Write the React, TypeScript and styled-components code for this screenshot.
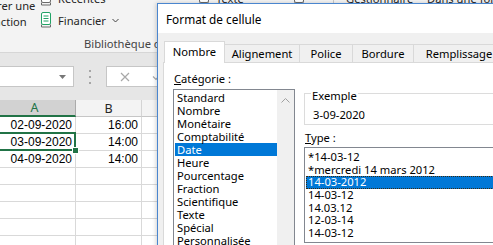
import { Fragment } from "react";
import styled, { createGlobalStyle } from "styled-components";

const GlobalStyle = createGlobalStyle`
  html, body { margin: 0; padding: 0; overflow: hidden; background: #fff; }
`;

const Screen = styled.div`
  position: relative;
  width: 493px;
  height: 245px;
  overflow: hidden;
  font-family: "Noto Sans", "Segoe UI", sans-serif;
  font-size: 11.2px;
  color: #262626;
  background: #fff;
`;

/* ---------- Excel window ---------- */

const Excel = styled.div`
  display: flex;
  flex-direction: column;
`;

const Ribbon = styled.div`
  height: 52px;
  background: #f3f3f3;
  border-bottom: 1px solid #d6d6d6;
  display: flex;
  flex-direction: column;
`;

const RibbonBody = styled.div`
  height: 31px;
  flex-shrink: 0;
  display: flex;
  overflow: hidden;
  white-space: nowrap;
`;

const BigButton = styled.div<{ $width: number; $offset?: number }>`
  width: ${({ $width }) => $width}px;
  margin-left: ${({ $offset = 0 }) => $offset}px;
  flex-shrink: 0;
  display: flex;
  flex-direction: column;
  justify-content: flex-end;
  align-items: center;
  padding-bottom: 1px;
  line-height: 16px;
  color: #262626;
`;

const RibbonColumn = styled.div<{ $width: number }>`
  width: ${({ $width }) => $width}px;
  flex-shrink: 0;
  display: flex;
  flex-direction: column;
  justify-content: flex-end;
`;

const RibbonItem = styled.div`
  height: 22px;
  flex-shrink: 0;
  display: flex;
  align-items: center;
  gap: 6px;
  color: #262626;
`;

const RibbonSeparator = styled.div`
  width: 1px;
  margin: 0 12px 0 0;
  background: #c8c8c8;
  flex-shrink: 0;
`;

const GroupLabel = styled.div`
  padding: 5px 0 0 84px;
  line-height: 16px;
  color: #444;
  white-space: nowrap;
`;

const FormulaBar = styled.div`
  height: 47px;
  background: #e6e6e6;
  display: flex;
  align-items: center;
`;

const NameBox = styled.div`
  width: 75px;
  height: 21px;
  margin-left: -1px;
  box-sizing: border-box;
  background: #fff;
  border: 1px solid #c6c6c6;
  display: flex;
  align-items: center;
  justify-content: flex-end;
  padding-right: 7px;
`;

const Grip = styled.div`
  width: 2px;
  margin: 0 15px 0 15px;
  display: flex;
  flex-direction: column;
  gap: 4px;
  & > span {
    width: 2px;
    height: 2px;
    background: #a6a6a6;
  }
`;

const FxBox = styled.div`
  flex: 1;
  height: 21px;
  box-sizing: border-box;
  background: #fff;
  border: 1px solid #c6c6c6;
  display: flex;
  align-items: center;
  padding-left: 13px;
  gap: 22px;
`;

const Sheet = styled.div`
  margin-left: -6px;
  display: grid;
  grid-template-columns: 82px 66px 1fr;
  grid-auto-rows: 17px;
  font-family: "Liberation Sans", Arial, sans-serif;
  font-size: 12px;
  color: #000;
`;

const HeaderCell = styled.div<{ $active?: boolean }>`
  box-sizing: border-box;
  display: flex;
  align-items: center;
  justify-content: center;
  font-family: "Noto Sans", "Segoe UI", sans-serif;
  font-size: 12.5px;
  background: ${({ $active }) => ($active ? "#d2d2d2" : "#f3f3f3")};
  color: ${({ $active }) => ($active ? "#217346" : "#262626")};
  border-right: 1px solid ${({ $active }) => ($active ? "#ababab" : "#d4d4d4")};
  border-bottom: ${({ $active }) =>
    $active ? "2px solid #217346" : "1px solid #c6c6c6"};
`;

const Cell = styled.div<{ $selected?: boolean }>`
  position: relative;
  box-sizing: border-box;
  border-right: 1px solid #d9d9d9;
  border-bottom: 1px solid #d9d9d9;
  display: flex;
  align-items: center;
  justify-content: flex-end;
  padding-right: 3px;
  line-height: 16px;

  ${({ $selected }) =>
    $selected &&
    `
    &::after {
      content: "";
      position: absolute;
      top: -2px;
      left: -2px;
      right: -1px;
      bottom: -1px;
      border: 2px solid #217346;
    }
    &::before {
      content: "";
      position: absolute;
      right: -4px;
      bottom: -4px;
      width: 5px;
      height: 5px;
      background: #217346;
      border: 1px solid #fff;
      z-index: 1;
    }
  `}
`;

/* ---------- Format de cellule dialog ---------- */

const Dialog = styled.section`
  position: absolute;
  left: 157px;
  top: 3px;
  width: 380px;
  height: 290px;
  box-sizing: border-box;
  overflow: hidden;
  background: #f0f0f0;
  border: 1px solid #4a86cf;
  box-shadow: -1px 0 4px rgba(0, 0, 0, 0.18);
  display: flex;
  flex-direction: column;
  color: #000;
`;

const TitleBar = styled.header`
  height: 29px;
  flex-shrink: 0;
  background: #fff;
  display: flex;
  align-items: center;
  padding-left: 8px;
  font-size: 11.8px;
`;

const DialogBody = styled.div`
  flex: 1;
  min-height: 0;
  display: flex;
  flex-direction: column;
  padding: 8px 0 0 5px;
`;

const TabList = styled.div`
  height: 21px;
  flex-shrink: 0;
  display: flex;
  align-items: flex-end;
  padding-left: 1px;
`;

const Tab = styled.div<{ $width: number; $active?: boolean }>`
  position: relative;
  flex-shrink: 0;
  width: ${({ $width }) => $width}px;
  height: ${({ $active }) => ($active ? 22 : 18)}px;
  margin: 0 -1px ${({ $active }) => ($active ? -1 : 0)}px 0;
  box-sizing: border-box;
  border: 1px solid #d9d9d9;
  border-bottom: none;
  background: ${({ $active }) => ($active ? "#fff" : "#f0f0f0")};
  z-index: ${({ $active }) => ($active ? 1 : 0)};
  display: flex;
  align-items: center;
  justify-content: center;
  padding-bottom: ${({ $active }) => ($active ? 2 : 0)}px;
  white-space: nowrap;
`;

const TabPanel = styled.div`
  flex: 1;
  background: #fff;
  border: 1px solid #d9d9d9;
  padding: 8px 0 0 9px;
  display: flex;
  gap: 9px;
`;

const Column = styled.div<{ $width?: number }>`
  display: flex;
  flex-direction: column;
  ${({ $width }) => ($width ? `width: ${$width}px; flex-shrink: 0;` : "flex: 1;")}
`;

const FieldLabel = styled.div<{ $gap?: number }>`
  line-height: 16px;
  flex-shrink: 0;
  margin-top: ${({ $gap = 0 }) => $gap}px;
  margin-left: 1px;
`;

const Accel = styled.span`
  text-decoration: underline;
`;

const ListBox = styled.div<{ $height: number; $gap: number }>`
  margin-top: ${({ $gap }) => $gap}px;
  height: ${({ $height }) => $height}px;
  flex-shrink: 0;
  box-sizing: border-box;
  border: 1px solid #828790;
  display: flex;
  background: #fff;
`;

const ListItems = styled.ul<{ $pad: number }>`
  flex: 1;
  margin: 0;
  padding: ${({ $pad }) => $pad}px 0 0 1px;
  list-style: none;
`;

const ListItem = styled.li<{ $row: number; $selected?: boolean; $focus?: boolean }>`
  height: ${({ $row }) => $row}px;
  line-height: ${({ $row }) => $row}px;
  padding-left: 2px;
  white-space: nowrap;
  background: ${({ $selected }) => ($selected ? "#0078d7" : "transparent")};
  color: ${({ $selected }) => ($selected ? "#fff" : "#000")};
  outline: ${({ $focus }) => ($focus ? "1px dotted #3a2a10" : "none")};
  outline-offset: -1px;
`;

const ScrollBar = styled.div`
  width: 17px;
  background: #f0f0f0;
  display: flex;
  justify-content: center;
  padding-top: 8px;
`;

const GroupBox = styled.div`
  margin-top: 22px;
  height: 32px;
  flex-shrink: 0;
  box-sizing: border-box;
  border: 1px solid #dcdcdc;
  display: flex;
  flex-direction: column;
  align-items: flex-start;
`;

const GroupTitle = styled.div`
  margin: -5px 0 0 6px;
  padding: 0 1px;
  line-height: 14px;
  background: #fff;
`;

const GroupValue = styled.div`
  margin: 5px 0 0 8px;
  line-height: 14px;
`;

/* ---------- icons ---------- */

const BookIcon = ({ color }: { color: string }) => (
  <svg width="12" height="16" viewBox="0 0 12 16">
    <rect x="1.5" y="0.5" width="9" height="12" rx="1.5" fill="#fff" stroke={color} />
    <path d="M3.5 4h5M3.5 6.5h5M3.5 9h5" stroke={color} />
    <path d="M1.5 12.5v2.5h9v-2.5" stroke="#6a6a6a" fill="none" />
  </svg>
);

const Chevron = ({ color = "#444" }: { color?: string }) => (
  <svg width="7" height="5" viewBox="0 0 7 5">
    <path d="M0.5 1l3 3 3-3" fill="none" stroke={color} />
  </svg>
);

const ChevronUp = () => (
  <svg width="9" height="5" viewBox="0 0 9 5">
    <path d="M0.5 4.5l4-4 4 4" fill="none" stroke="#a0a0a0" />
  </svg>
);

const DropTriangle = () => (
  <svg width="7" height="4" viewBox="0 0 7 4">
    <path d="M0 0h7L3.5 4z" fill="#777" />
  </svg>
);

const CrossIcon = () => (
  <svg width="10" height="10" viewBox="0 0 10 10">
    <path d="M1 1l8 8M9 1l-8 8" stroke="#a8a8a8" strokeWidth="1.2" />
  </svg>
);

const CheckIcon = () => (
  <svg width="11" height="9" viewBox="0 0 11 9">
    <path d="M1 4.5l3 3 6-6.5" fill="none" stroke="#a8a8a8" strokeWidth="1.2" />
  </svg>
);

const categories = [
  "Standard",
  "Nombre",
  "Monétaire",
  "Comptabilité",
  "Date",
  "Heure",
  "Pourcentage",
  "Fraction",
  "Scientifique",
  "Texte",
  "Spécial",
  "Personnalisée",
];

const dateTypes = [
  "*14-03-12",
  "*mercredi 14 mars 2012",
  "14-03-2012",
  "14-03-12",
  "14.03.12",
  "12-03-14",
  "14-03-12",
];

const rows = [
  ["02-09-2020", "16:00"],
  ["03-09-2020", "14:00"],
  ["04-09-2020", "14:00"],
  ["", ""],
  ["", ""],
  ["", ""],
  ["", ""],
  ["", ""],
];

const tabs = [
  { label: "Nombre", width: 61 },
  { label: "Alignement", width: 76 },
  { label: "Police", width: 54 },
  { label: "Bordure", width: 62 },
  { label: "Remplissage", width: 92 },
];

export default function App() {
  return (
    <Screen>
      <GlobalStyle />
      <Excel>
        <Ribbon>
          <RibbonBody>
            <BigButton $width={70} $offset={-30}>
              <span>Insérer une</span>
              <span>fonction</span>
            </BigButton>
            <RibbonColumn $width={158}>
              <RibbonItem>
                <BookIcon color="#6a6a6a" />
                <span>Récentes</span>
              </RibbonItem>
              <RibbonItem>
                <BookIcon color="#21a366" />
                <span>Financier</span>
                <Chevron />
              </RibbonItem>
            </RibbonColumn>
            <RibbonColumn $width={95}>
              <RibbonItem>
                <BookIcon color="#6a6a6a" />
                <span>Texte</span>
              </RibbonItem>
              <RibbonItem>
                <BookIcon color="#6a6a6a" />
                <span>Date et heure</span>
              </RibbonItem>
            </RibbonColumn>
            <RibbonColumn $width={40}>
              <RibbonItem>
                <BookIcon color="#6a6a6a" />
              </RibbonItem>
              <RibbonItem />
            </RibbonColumn>
            <RibbonSeparator />
            <RibbonColumn $width={75}>
              <RibbonItem>
                <span>Gestionnaire</span>
              </RibbonItem>
              <RibbonItem />
            </RibbonColumn>
            <RibbonColumn $width={100}>
              <RibbonItem>
                <BookIcon color="#6a6a6a" />
                <span>Dans une formule</span>
              </RibbonItem>
              <RibbonItem />
            </RibbonColumn>
          </RibbonBody>
          <GroupLabel>Bibliothèque de fonctions</GroupLabel>
        </Ribbon>

        <FormulaBar>
          <NameBox>
            <DropTriangle />
          </NameBox>
          <Grip>
            <span />
            <span />
            <span />
          </Grip>
          <FxBox>
            <CrossIcon />
            <CheckIcon />
          </FxBox>
        </FormulaBar>

        <Sheet>
          <HeaderCell $active>A</HeaderCell>
          <HeaderCell>B</HeaderCell>
          <HeaderCell>C</HeaderCell>
          {rows.map(([date, time], i) => (
            <Fragment key={i}>
              <Cell $selected={i === 1}>{date}</Cell>
              <Cell>{time}</Cell>
              <Cell />
            </Fragment>
          ))}
        </Sheet>
      </Excel>

      <Dialog>
        <TitleBar>Format de cellule</TitleBar>
        <DialogBody>
          <TabList>
            {tabs.map((t, i) => (
              <Tab key={t.label} $width={t.width} $active={i === 0}>
                {t.label}
              </Tab>
            ))}
          </TabList>
          <TabPanel>
            <Column $width={122}>
              <FieldLabel>
                <Accel>C</Accel>atégorie :
              </FieldLabel>
              <ListBox $height={180} $gap={2}>
                <ListItems $pad={1}>
                  {categories.map((c) => (
                    <ListItem key={c} $row={13} $selected={c === "Date"}>
                      {c}
                    </ListItem>
                  ))}
                </ListItems>
                <ScrollBar>
                  <ChevronUp />
                </ScrollBar>
              </ListBox>
            </Column>
            <Column>
              <GroupBox>
                <GroupTitle>Exemple</GroupTitle>
                <GroupValue>3-09-2020</GroupValue>
              </GroupBox>
              <FieldLabel $gap={5}>
                <Accel>T</Accel>ype :
              </FieldLabel>
              <ListBox $height={96} $gap={1}>
                <ListItems $pad={3}>
                  {dateTypes.map((d, i) => (
                    <ListItem
                      key={`${d}-${i}`}
                      $row={12.67}
                      $selected={i === 2}
                      $focus={i === 2}
                    >
                      {d}
                    </ListItem>
                  ))}
                </ListItems>
              </ListBox>
            </Column>
          </TabPanel>
        </DialogBody>
      </Dialog>
    </Screen>
  );
}
